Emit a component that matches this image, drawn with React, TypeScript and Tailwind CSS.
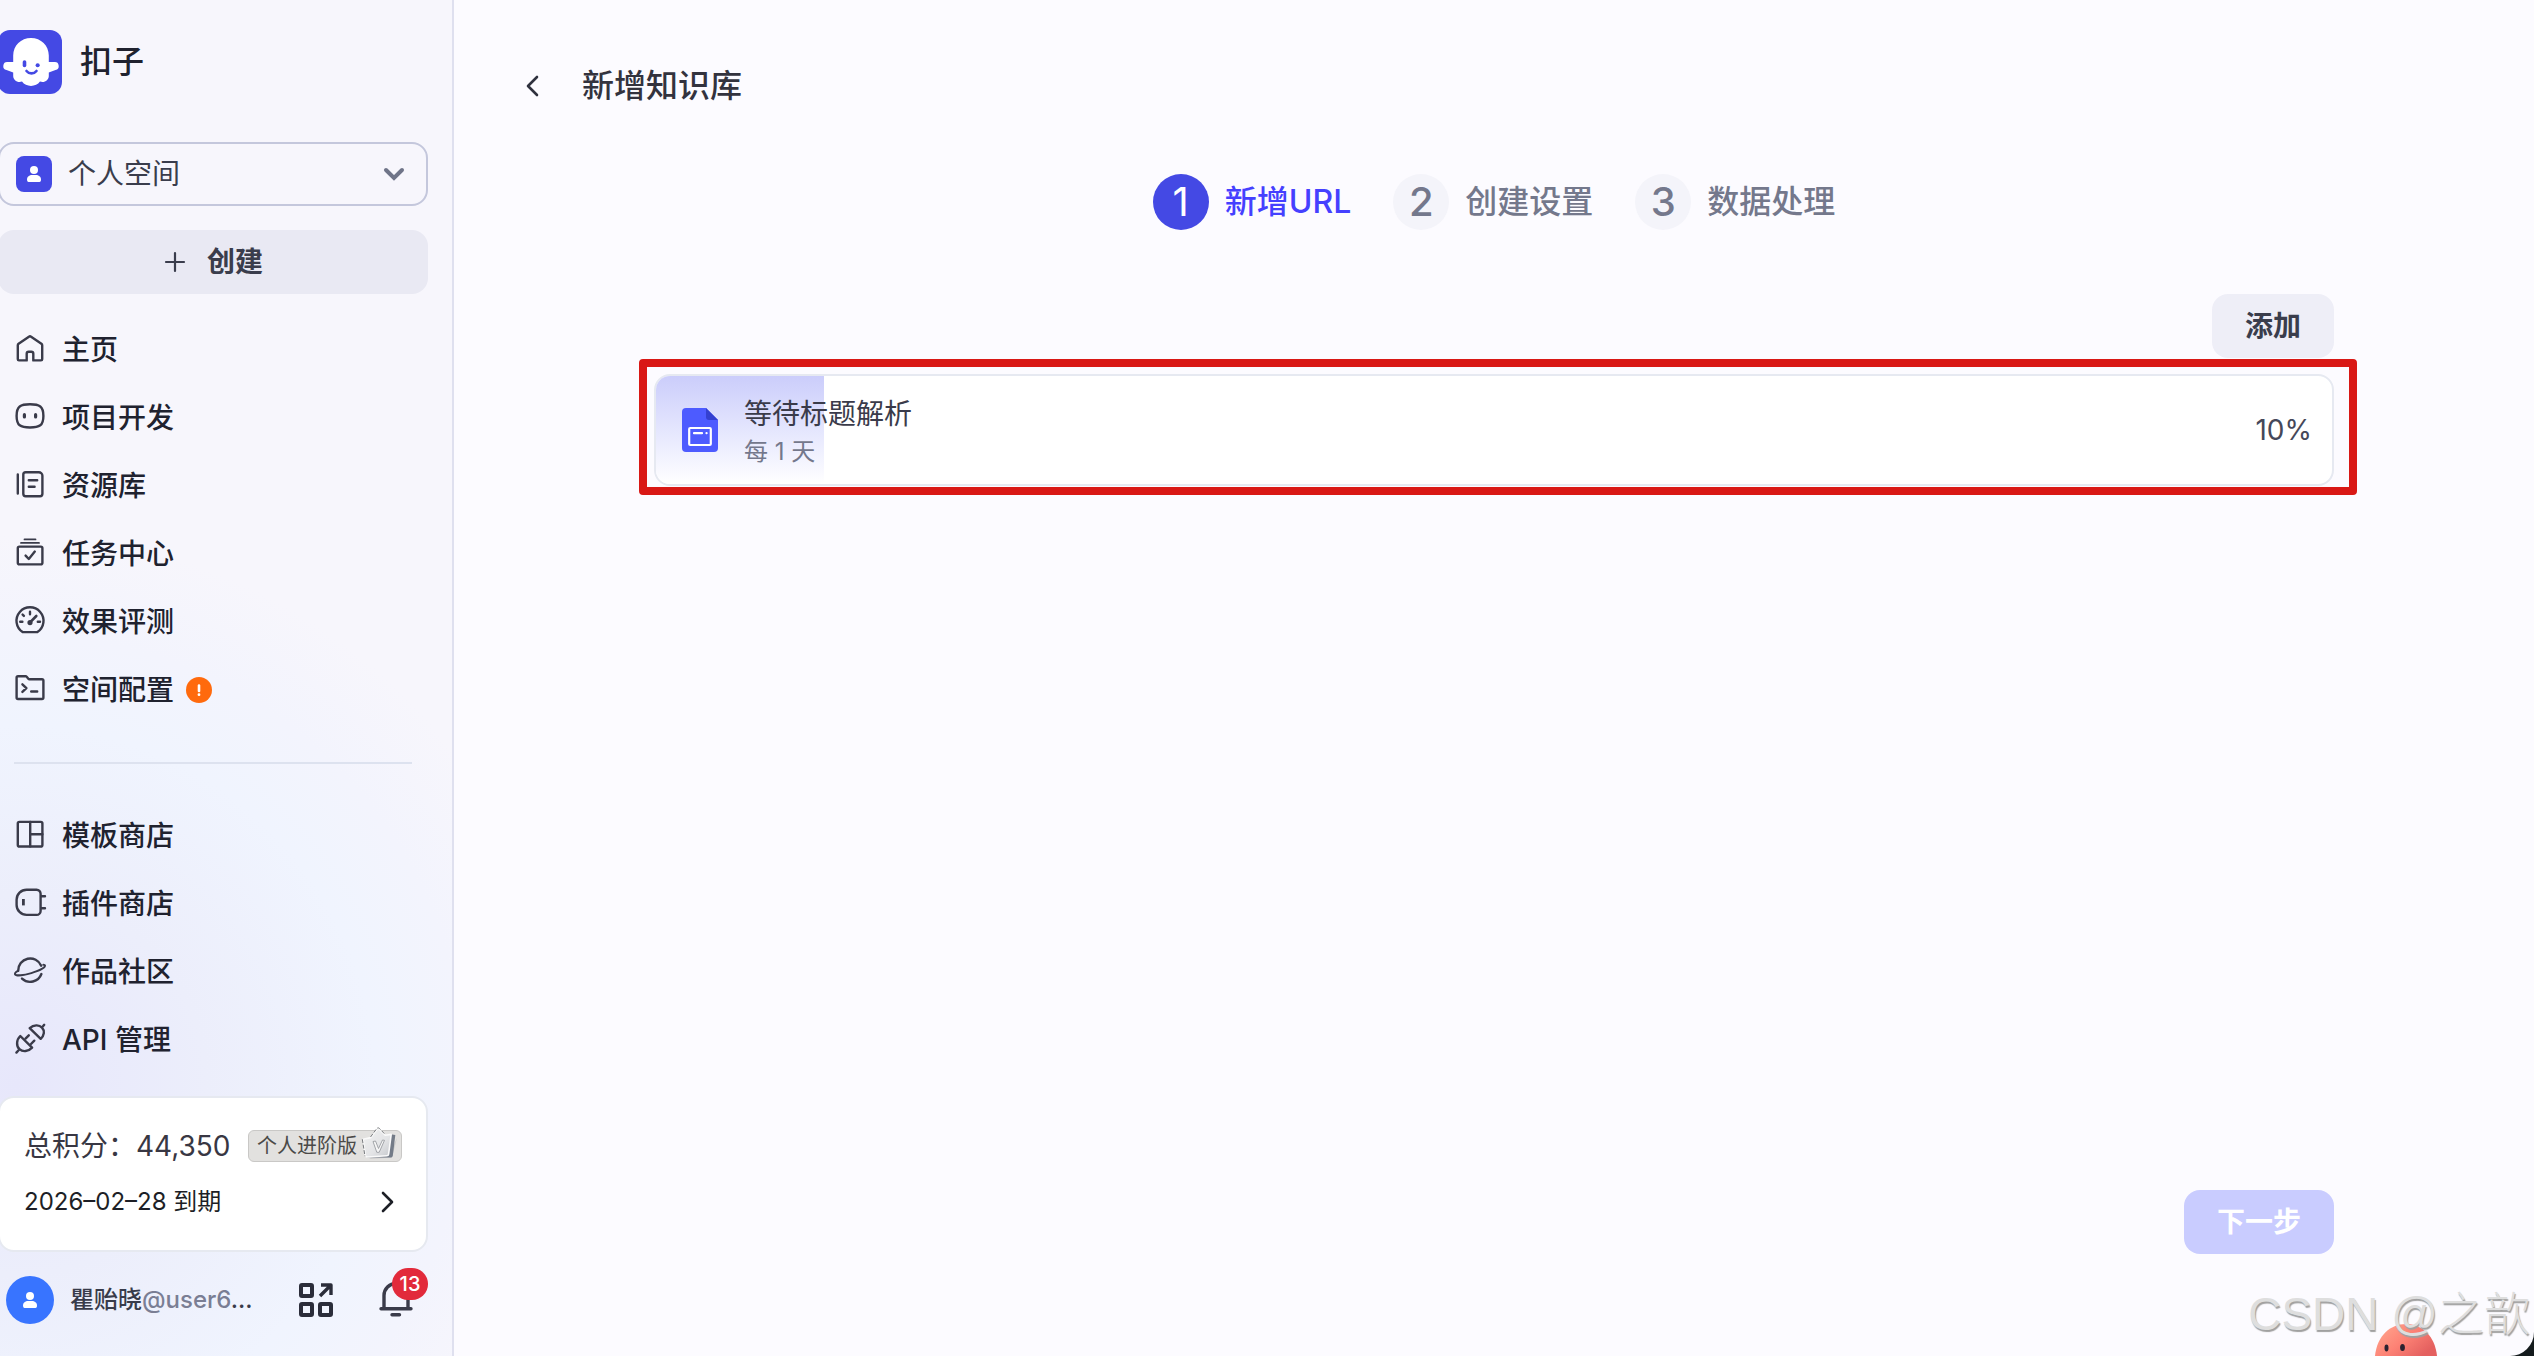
import React from "react";

type IconProps = { children: React.ReactNode };

function MenuIcon({ children }: IconProps) {
  return (
    <svg
      className="size-8 shrink-0 overflow-visible text-[#3a3b4a]"
      viewBox="0 0 32 32"
      fill="none"
      stroke="currentColor"
      strokeWidth="2.4"
      strokeLinecap="round"
      strokeLinejoin="round"
      aria-hidden="true"
    >
      {children}
    </svg>
  );
}

const HomeIcon = (
  <MenuIcon>
    <path d="M3.8 11.3a2 2 0 0 1 .8-1.6l10.3-7a2 2 0 0 1 2.2 0l10.3 7a2 2 0 0 1 .8 1.6V25.200a1.200 1.200 0 0 1-1.200 1.200h-7.700v-6.600a2 2 0 0 0-2-2h-2.600a2 2 0 0 0-2 2v6.600H5a1.200 1.200 0 0 1-1.200-1.200z" />
  </MenuIcon>
);
const BotIcon = (
  <MenuIcon>
    <path d="M16 2.300c9.500 0 13.400 2 13.400 11.600S25.500 25.500 16 25.500 2.600 23.500 2.600 13.900 6.500 2.300 16 2.300z" />
    <path d="M10.400 12.700v2.200M21.600 12.700v2.200" strokeWidth="3.200" />
  </MenuIcon>
);
const LibraryIcon = (
  <MenuIcon>
    <path d="M3.800 4.500v19M11.700 2.200h13.100a3.600 3.600 0 0 1 3.600 3.600v18a2.400 2.400 0 0 1-2.400 2.400H11.700a2.400 2.400 0 0 1-2.400-2.400V4.600a2.400 2.400 0 0 1 2.400-2.400zM14.800 10.200h8.400M14.800 16.700h5.800" />
  </MenuIcon>
);
const TaskIcon = (
  <MenuIcon>
    <path d="M10.500 1.400h11M7 4.900h18" strokeWidth="1.800" />
    <rect x="3.800" y="8.600" width="24.600" height="17.800" rx="1.600" />
    <path d="m11.600 17.600 3.200 3.400 6-7.400" />
  </MenuIcon>
);
const GaugeIcon = (
  <MenuIcon>
    <path d="M8.600 26.100a13.500 13.500 0 1 1 14.800 0z" />
    <path d="M16 5.800v2.400M8.600 8.600l1.300 1.300M6.200 15.700h2.200M23.800 15.700H26" />
    <path d="m16.300 16.200 6-6.200" strokeWidth="2.600" />
    <circle cx="16" cy="16.600" r="1.400" fill="currentColor" />
  </MenuIcon>
);
const FolderIcon = (
  <MenuIcon>
    <path d="M4 2.300h7.600a1.600 1.600 0 0 1 1.100.5l1.600 1.900a1.600 1.600 0 0 0 1.100.5H28a1.400 1.400 0 0 1 1.400 1.400v17a1.400 1.400 0 0 1-1.400 1.400H4a1.400 1.400 0 0 1-1.400-1.400V3.700A1.400 1.400 0 0 1 4 2.300z" />
    <path d="m8.400 10.300 4 3.800-4 3.800M17.200 17.500h6" />
  </MenuIcon>
);
const TemplateIcon = (
  <MenuIcon>
    <rect x="3.800" y="1.900" width="24.600" height="24.600" rx="1.600" />
    <path d="M16.200 2v24.400M16.200 14.200h12.200" />
  </MenuIcon>
);
const PluginIcon = (
  <MenuIcon>
    <path d="M12.600 1.700h10a4 4 0 0 1 4 4v17.200a4 4 0 0 1-4 4h-10a10 10 0 0 1-10-10v-5.200a10 10 0 0 1 10-10zM27 8.200h4M27 20.200h4" />
    <path d="M9.400 11v6.400" strokeWidth="2.800" strokeLinecap="butt" />
  </MenuIcon>
);
const PlanetIcon = (
  <MenuIcon>
    <path d="M4.200 14.800a12 12 0 0 1 23-5.100M8 22.600a12 12 0 0 0 19.400-4.600" />
    <path d="M3.800 14.800C1.600 16.200.6 17.400 1 18.200c1 1.900 8.300 1.200 16.300-1.100 8.200-2.400 14-5.600 13.700-7.600-.1-.6-.7-.8-1.700-.8" strokeWidth="2" />
  </MenuIcon>
);
const ApiIcon = (
  <MenuIcon>
    <path d="m15.700 4.200 11 10.600c3.600-3.300 4.300-8 1.300-11.200s-8.300-2.800-12.300.6zM28.200 3.200l2-2.400" />
    <path d="m6.300 12 11.800 11.600c-3.900 4.100-9.200 4.600-12.600 1.600s-3.300-9.200.8-13.200zM4.800 26l-2.400 2.600" />
    <path d="m11.500 14.600 3.300-3.300M17 20l3.300-3.300" />
  </MenuIcon>
);

type Item = { label: string; icon: React.ReactNode; alert?: boolean };

const primaryItems: Item[] = [
  { label: "主页", icon: HomeIcon },
  { label: "项目开发", icon: BotIcon },
  { label: "资源库", icon: LibraryIcon },
  { label: "任务中心", icon: TaskIcon },
  { label: "效果评测", icon: GaugeIcon },
  { label: "空间配置", icon: FolderIcon, alert: true },
];

const exploreItems: Item[] = [
  { label: "模板商店", icon: TemplateIcon },
  { label: "插件商店", icon: PluginIcon },
  { label: "作品社区", icon: PlanetIcon },
  { label: "API 管理", icon: ApiIcon },
];

function NavList({ items, label }: { items: Item[]; label: string }) {
  return (
    <nav aria-label={label}>
      <ul className="flex flex-col gap-1">
        {items.map((item) => (
          <li key={item.label}>
            <a href="#" className="flex h-16 items-center gap-4 pl-4 text-[28px] leading-10 font-medium text-[#20222f]">
              {item.icon}
              <span>{item.label}</span>
              {item.alert && (
                <svg className="-ml-1 size-[26px]" viewBox="0 0 26 26" aria-hidden="true">
                  <circle cx="13" cy="13" r="13" fill="#ff6a0d" />
                  <path d="M13 8.500v5.500" stroke="#fff" strokeWidth="2.600" strokeLinecap="round" />
                  <circle cx="13" cy="17.700" r="1.400" fill="#fff" />
                </svg>
              )}
            </a>
          </li>
        ))}
      </ul>
    </nav>
  );
}

function PersonGlyph({ className }: { className: string }) {
  return (
    <svg className={className} viewBox="0 0 16 16" fill="#fff" aria-hidden="true">
      <circle cx="8" cy="4" r="4" />
      <path d="M1 13.500C1 10.500 3.500 9 6 9h4c2.500 0 5 1.500 5 4.500 0 1.500-.5 2.500-1.500 2.500h-11C1.500 16 1 15 1 13.500z" />
    </svg>
  );
}

function Logo() {
  return (
    <svg className="size-16" viewBox="0 0 64 64" aria-hidden="true">
      <rect width="64" height="64" rx="12" fill="#4449e4" />
      <path
        fill="#fff"
        d="M33 8c10 0 17.800 7.500 17.800 17.500V32h5.500a4 4 0 0 1 1.200 7.900l-6.700 2.600V46c0 4-4.300 7.300-8.800 5.600C40 54.500 36.500 56 33 56s-7-1.500-9-4.400c-4.500 1.700-8.800-1.600-8.800-5.600v-3.500l-6.700-2.600A4 4 0 0 1 9.700 32h5.500v-6.500C15.200 15.500 23 8 33 8z"
      />
      <g fill="none" stroke="#4449e4" strokeLinecap="round">
        <path d="M26.500 32v3.500" strokeWidth="3.600" />
        <path d="M28.500 41c2.500 3.200 7.500 3.200 10 0" strokeWidth="2.600" />
        <path d="M39.600 35.200h.1" strokeWidth="4" />
      </g>
    </svg>
  );
}

function Crown() {
  return (
    <svg className="mr-0.5 -mt-2 -mb-1 ml-1 h-9 w-[38px] shrink-0" viewBox="0 0 38 36" aria-hidden="true">
      <defs>
        <linearGradient id="crown-face" x1="0" y1="0" x2="1" y2="1">
          <stop offset="0" stopColor="#f2f2f2" />
          <stop offset="0.6" stopColor="#e3e4e6" />
          <stop offset="1" stopColor="#c4c7cb" />
        </linearGradient>
      </defs>
      <path d="m8 33 23-1.500L36 12l-4 8z" fill="#cbcbca" />
      <path d="M6 31.600h23.400c1.400 0 2.100-.6 2.400-1.800L34.300 9l-4.600-.8z" fill="#737b87" />
      <path
        d="M2 13.200 9.700 11.600 16 3.400c.8-1 1.700-1 2.500 0l5.700 5.800 6-.8-2.600 19.800c-.1 1-.8 1.600-1.800 1.600L6.600 31c-1.200 0-2-.6-2.200-1.700z"
        fill="url(#crown-face)"
        stroke="#fafafa"
        strokeWidth="1.600"
        strokeLinejoin="round"
      />
      <path d="M1.300 13.200 4 30.200M9.500 11l6.200-8.300c.9-1.100 2-1.100 3 0l5 5.300" fill="none" stroke="#6a6d72" strokeWidth="0.900" strokeDasharray="4 1.500" />
      <path d="m12 15.500 2.500-.5 3 7.500 4-8.500 2 .3-5.300 12h-2.400z" fill="#f6f6f6" stroke="#9a9da2" strokeWidth="0.900" />
    </svg>
  );
}

function Sidebar() {
  return (
    <aside className="-ml-0.5 flex w-[456px] shrink-0 flex-col border-r-2 border-[#dfe0ef] bg-[#f7f6fc] bg-[radial-gradient(circle_at_4%_80%,#e7e7fb_0px,#eceefb_190px,#f0f4fe_360px,#f3f4fd_450px,#f7f6fc_550px)] pt-[30px] pr-6 pb-8">
      <div className="flex items-center gap-[18px]">
        <Logo />
        <span className="text-[32px] leading-10 font-medium text-[#20222f]">扣子</span>
      </div>

      <button type="button" className="mt-12 flex h-16 items-center rounded-2xl border-2 border-[#c4c7dc] pr-5 pl-4 text-[28px] text-[#3a3d4c]">
        <span className="flex size-9 items-center justify-center rounded-lg bg-[#4449e4]">
          <PersonGlyph className="size-4" />
        </span>
        <span className="ml-4">个人空间</span>
        <svg className="ml-auto h-4 w-6" viewBox="0 0 24 16" fill="none" stroke="#6f7488" strokeWidth="4" strokeLinecap="round" aria-hidden="true">
          <path d="m4 4 8 8 8-8" />
        </svg>
      </button>

      <button type="button" className="mt-6 flex h-16 items-center justify-center gap-5 rounded-2xl bg-[#e9e9f3] text-[28px] font-semibold text-[#3a3d4c]">
        <svg className="size-6" viewBox="0 0 24 24" stroke="currentColor" strokeWidth="2.200" strokeLinecap="round" aria-hidden="true">
          <path d="M12 3v18M3 12h18" />
        </svg>
        创建
      </button>

      <div className="mt-6">
        <NavList items={primaryItems} label="空间" />
      </div>
      <hr className="mt-10 mr-4 ml-4 border-t-2 border-[#dde2ef]" />
      <div className="mt-10">
        <NavList items={exploreItems} label="探索" />
      </div>

      <section className="mt-auto flex flex-col rounded-2xl border-2 border-[#e6e9f0] bg-white pt-7 pr-6 pb-7 pl-6">
        <div className="flex items-center justify-between whitespace-nowrap text-[#383743]">
          <span className="text-[28px] leading-10">总积分：44,350</span>
          <span className="flex h-8 items-center rounded-md border border-[#c9c8c6] bg-[#e2e1df] pl-2 text-xl leading-6 text-[#4b4a48]">
            个人进阶版
            <Crown />
          </span>
        </div>
        <a href="#" className="mt-4 flex items-center justify-between text-2xl leading-10 text-[#1d1f26]">
          <span>2026–02–28 到期</span>
          <svg className="mr-1.5 h-6 w-4" viewBox="0 0 16 24" fill="none" stroke="currentColor" strokeWidth="2.600" strokeLinecap="round" strokeLinejoin="round" aria-hidden="true">
            <path d="m3 3 9 9-9 9" />
          </svg>
        </a>
      </section>

      <div className="mt-6 flex items-center pl-2">
        <button type="button" aria-label="账户" className="flex size-12 shrink-0 items-center justify-center rounded-full bg-[#3874ff]">
          <PersonGlyph className="size-4" />
        </button>
        <p className="ml-4 w-[186px] truncate text-2xl leading-9 font-medium text-[#383b4a]">
          瞿贻晓<span className="text-[#7a7e94]">@user6</span>...
        </p>
        <button type="button" aria-label="应用" className="ml-[42px]">
          <svg className="size-9" viewBox="0 0 36 36" fill="none" stroke="#2b2d3a" strokeWidth="4" strokeLinejoin="round" strokeLinecap="round" aria-hidden="true">
            <rect x="3" y="3" width="11" height="11" rx="1" />
            <rect x="3" y="22" width="11" height="11" rx="1" />
            <rect x="22" y="22" width="11" height="11" rx="1" />
            <path d="M22 14 32 4M23 3h10v10" strokeWidth="3.400" strokeLinecap="butt" />
          </svg>
        </button>
        <button type="button" aria-label="通知" className="relative ml-auto mr-3">
          <svg className="size-10" viewBox="0 0 40 40" fill="none" stroke="#3a3b4a" strokeWidth="3.400" strokeLinecap="round" aria-hidden="true">
            <path d="M8 28.500V15.500a12 12 0 0 1 24 0v13M5 28.700h30M16 34.700h7.500" />
          </svg>
          <span className="absolute -top-3 -right-3 flex h-8 w-9 items-center justify-center rounded-full bg-[#e22a3b] text-xl font-medium text-white">
            13
          </span>
        </button>
      </div>
    </aside>
  );
}

const steps = ["新增URL", "创建设置", "数据处理"];

function Steps() {
  return (
    <ol className="flex items-center justify-center gap-[42px]">
      {steps.map((step, i) => (
        <li
          key={step}
          aria-current={i === 0 ? "step" : undefined}
          className={i === 0 ? "flex items-center gap-4 text-[#4540ff]" : "flex items-center gap-4 text-[#74788c]"}
        >
          <span
            className={
              i === 0
                ? "flex size-14 items-center justify-center rounded-full bg-[#4449e4] text-[40px] text-white"
                : "flex size-14 items-center justify-center rounded-full bg-[#f4f4fa] text-[40px] font-medium"
            }
          >
            {i + 1}
          </span>
          <span className="text-[32px] leading-10 font-medium">{step}</span>
        </li>
      ))}
    </ol>
  );
}

function DocIcon() {
  return (
    <svg className="h-11 w-9 shrink-0" viewBox="0 0 36 44" aria-hidden="true">
      <path d="M4 0h20l12 12v28a4 4 0 0 1-4 4H4a4 4 0 0 1-4-4V4a4 4 0 0 1 4-4z" fill="#4d5bff" />
      <path d="M24 0l12 12H27a3 3 0 0 1-3-3z" fill="#3440d0" />
      <rect x="7.200" y="20" width="21.600" height="17" rx="1" fill="none" stroke="#fff" strokeWidth="2.200" />
      <path d="M12 25.200h8M24.500 25.200h.1" stroke="#fff" strokeWidth="2.200" strokeLinecap="round" />
    </svg>
  );
}

function UrlCard({ title, schedule, progress }: { title: string; schedule: string; progress: number }) {
  return (
    <div className="relative">
      <article className="relative flex h-28 items-center overflow-hidden rounded-2xl border-2 border-[#e6e9f1] bg-white pr-5 pl-[26px]">
        <div
          className="absolute inset-y-0 left-0 bg-linear-to-b from-[#cbcdfb] to-white"
          style={{ width: `${progress}%` }}
        />
        <div className="relative flex flex-1 items-center gap-[26px]">
          <DocIcon />
          <div className="flex flex-col pt-1">
            <span className="text-[28px] leading-10 text-[#3a3b4a]">{title}</span>
            <span className="text-2xl leading-9 text-[#74788c]">{schedule}</span>
          </div>
          <span className="ml-auto text-[28px] leading-10 text-[#45485a]">{progress}%</span>
        </div>
      </article>
      <div className="pointer-events-none absolute -top-[15px] -right-[23px] -bottom-[9px] -left-[15px] rounded border-8 border-[#d91815]" />
    </div>
  );
}

function Mascot() {
  return (
    <svg className="h-8 w-[62px]" viewBox="0 0 62 32" aria-hidden="true">
      <defs>
        <linearGradient id="mascot" x1="0" y1="0" x2="1" y2="0.600">
          <stop offset="0" stopColor="#ffab92" />
          <stop offset="0.550" stopColor="#fd8275" />
          <stop offset="1" stopColor="#e4605f" />
        </linearGradient>
      </defs>
      <path d="M0 32C2 12 15 0 31 0s29 12 31 32z" fill="url(#mascot)" />
      <ellipse cx="11.500" cy="24" rx="2" ry="3.400" fill="#2b2230" />
      <ellipse cx="27.500" cy="23.500" rx="2.400" ry="3.600" fill="#2b2230" />
    </svg>
  );
}

export default function App() {
  return (
    <div className="bg-[#141b1d] font-['Inter','Noto_Sans_CJK_SC',sans-serif]">
      <div className="relative flex min-h-screen overflow-hidden rounded-br-[24px] bg-[#fcfbff]">
        <Sidebar />
        <main className="flex min-w-0 flex-1 flex-col">
          <header className="flex items-center gap-[38px] pt-[66px] pl-[66px]">
            <button type="button" aria-label="返回" className="flex h-10 w-6 items-center justify-center">
              <svg className="h-6 w-4" viewBox="0 0 16 24" fill="none" stroke="#2f313e" strokeWidth="2.600" strokeLinecap="round" strokeLinejoin="round" aria-hidden="true">
                <path d="m13 3-9 9 9 9" />
              </svg>
            </button>
            <h1 className="text-[32px] leading-10 font-medium text-[#33333e]">新增知识库</h1>
          </header>

          <div className="mt-[68px]">
            <Steps />
          </div>

          <div className="flex flex-1 flex-col px-[200px] pt-16 pb-[102px]">
            <button type="button" className="h-16 self-end rounded-2xl bg-[#eeeef7] px-[33px] text-[28px] font-semibold text-[#3a3d4c]">
              添加
            </button>
            <div className="mt-4">
              <UrlCard title="等待标题解析" schedule="每 1 天" progress={10} />
            </div>
            <button type="button" disabled className="mt-auto h-16 self-end rounded-2xl bg-[#c9ccff] px-[33px] text-[28px] font-semibold text-white">
              下一步
            </button>
          </div>
        </main>
        <div className="pointer-events-none absolute right-[97px] bottom-0">
          <Mascot />
        </div>
        <div className="pointer-events-none absolute right-1 bottom-[10px] text-[46px] leading-[64px] font-light whitespace-nowrap text-[#dedede] [text-shadow:1px_2px_1px_#a0a0a0] font-['Liberation_Sans','Noto_Sans_CJK_SC',sans-serif]">
          CSDN @之歆
        </div>
      </div>
    </div>
  );
}
